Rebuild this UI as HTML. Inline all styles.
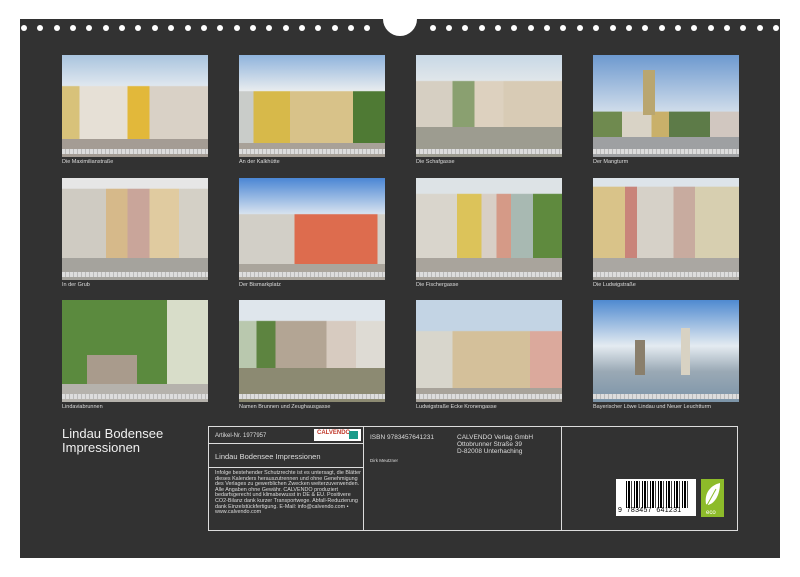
<!DOCTYPE html>
<html><head><meta charset="utf-8"><style>
*{margin:0;padding:0;box-sizing:border-box}
body{width:800px;height:577px;background:#fff;position:relative;overflow:hidden;font-family:"Liberation Sans",sans-serif}
#panel{position:absolute;left:20px;top:19px;width:760px;height:539px;background:#323232}
.dot{position:absolute;width:6px;height:6px;border-radius:50%;background:#fff;top:25px}
#notch{position:absolute;left:383px;top:2px;width:34px;height:34px;border-radius:50%;background:#fff}
.ph{position:absolute;width:146px;height:102px;overflow:hidden}
.ph .st{position:absolute;left:0;right:0;bottom:3px;height:5px;background:repeating-linear-gradient(90deg,#ddd 0 3px,#bbb 3px 4px)}
.cap{position:absolute;font-size:5.5px;color:#ddd}
.w{position:absolute;border:1.5px solid #ddd}
.t{position:absolute;color:#ddd}
</style></head><body>
<div id="panel"></div>
<div id="notch"></div>
<div id="dots"></div>
<script>
var d=document.getElementById('dots'),h='';
for(var i=0;i<22;i++){h+='<div class="dot" style="left:'+(21+i*16.35)+'px"></div>';}
for(var i=0;i<22;i++){h+='<div class="dot" style="left:'+(773-i*16.35)+'px"></div>';}
d.innerHTML=h;
</script>

<!-- Row 1 -->
<div class="ph" style="left:62px;top:55px;background:linear-gradient(180deg,#a9c4de 0%,#dfe7ef 30%,transparent 31%),linear-gradient(90deg,#d8c27a 0 12%,#e6e0d6 12% 45%,#e2b83a 45% 60%,#d9d1c6 60% 100%);"><div style="position:absolute;left:0;right:0;bottom:0;height:18px;background:#a49c94"></div><div class="st"></div></div>
<div class="ph" style="left:239px;top:55px;background:linear-gradient(180deg,#8fb3dc 0%,#e8ecef 35%,transparent 36%),linear-gradient(90deg,#c9ccc9 0 10%,#d7b94a 10% 35%,#d8c289 35% 78%,#4f7a34 78% 100%);"><div style="position:absolute;left:0;right:0;bottom:0;height:14px;background:#a8a198"></div><div class="st"></div></div>
<div class="ph" style="left:416px;top:55px;background:linear-gradient(180deg,#c8d8e6 0%,#e0e6ea 25%,transparent 26%),linear-gradient(90deg,#d6cfc2 0 25%,#8aa070 25% 40%,#ddd1bf 40% 60%,#d8cbb5 60% 100%);"><div style="position:absolute;left:0;right:0;bottom:0;height:30px;background:#9d9c90"></div><div class="st"></div></div>
<div class="ph" style="left:593px;top:55px;background:linear-gradient(180deg,#6d99cf 0%,#cfdcea 55%,transparent 56%),linear-gradient(90deg,#6f8a4f 0 20%,#d9d3c6 20% 40%,#c9b06a 40% 52%,#5d7b48 52% 80%,#d1c7c0 80% 100%);"><div style="position:absolute;left:50px;top:15px;width:12px;height:45px;background:#b9a670"></div><div style="position:absolute;left:0;right:0;bottom:0;height:20px;background:#9ea0a2"></div><div class="st"></div></div>
<div class="cap" style="left:62px;top:159px">Die Maximilianstraße</div>
<div class="cap" style="left:239px;top:159px">An der Kalkhütte</div>
<div class="cap" style="left:416px;top:159px">Die Schafgasse</div>
<div class="cap" style="left:593px;top:159px">Der Mangturm</div>

<!-- Row 2 -->
<div class="ph" style="left:62px;top:178px;background:linear-gradient(180deg,#e6e6e6 0 10%,transparent 11%),linear-gradient(90deg,#cfcbc2 0 30%,#d6b98a 30% 45%,#c9a59a 45% 60%,#e0cba0 60% 80%,#d4d0c6 80% 100%);"><div style="position:absolute;left:0;right:0;bottom:0;height:22px;background:#a5a39d"></div><div class="st"></div></div>
<div class="ph" style="left:239px;top:178px;background:linear-gradient(180deg,#4a86d4 0%,#d6e2ef 35%,transparent 36%),linear-gradient(90deg,#d2cfc7 0 38%,#dd6c4e 38% 95%,#d2cfc7 95% 100%);"><div style="position:absolute;left:0;right:0;bottom:0;height:16px;background:#aaa59c"></div><div class="st"></div></div>
<div class="ph" style="left:416px;top:178px;background:linear-gradient(180deg,#dde3e6 0 15%,transparent 16%),linear-gradient(90deg,#d9d5cc 0 28%,#dcc35a 28% 45%,#d8cfc6 45% 55%,#d59a87 55% 65%,#a8b9b2 65% 80%,#5f8a3e 80% 100%);"><div style="position:absolute;left:0;right:0;bottom:0;height:22px;background:#a9a49c"></div><div class="st"></div></div>
<div class="ph" style="left:593px;top:178px;background:linear-gradient(180deg,#dde4ea 0 8%,transparent 9%),linear-gradient(90deg,#d9c389 0 22%,#c9847a 22% 30%,#d6d1c8 30% 55%,#c8ab9f 55% 70%,#d7cfb0 70% 100%);"><div style="position:absolute;left:0;right:0;bottom:0;height:22px;background:#aaa7a2"></div><div class="st"></div></div>
<div class="cap" style="left:62px;top:282px">In der Grub</div>
<div class="cap" style="left:239px;top:282px">Der Bismarkplatz</div>
<div class="cap" style="left:416px;top:282px">Die Fischergasse</div>
<div class="cap" style="left:593px;top:282px">Die Ludwigstraße</div>

<!-- Row 3 -->
<div class="ph" style="left:62px;top:300px;background:linear-gradient(90deg,#5b8a3e 0 72%,#d8ddc9 72% 100%);"><div style="position:absolute;left:25px;top:55px;width:50px;height:30px;background:#a99b8c"></div><div style="position:absolute;left:0;right:0;bottom:0;height:18px;background:#b5b2ac"></div><div class="st"></div></div>
<div class="ph" style="left:239px;top:300px;background:linear-gradient(180deg,#dfe6ec 0 20%,transparent 21%),linear-gradient(90deg,#b9c8ae 0 12%,#5d8440 12% 25%,#b3a594 25% 60%,#d7cbc0 60% 80%,#dedbd4 80% 100%);"><div style="position:absolute;left:0;right:0;bottom:0;height:34px;background:#8c8a72"></div><div class="st"></div></div>
<div class="ph" style="left:416px;top:300px;background:linear-gradient(180deg,#c3d4e4 0 30%,transparent 31%),linear-gradient(90deg,#d8d6cc 0 25%,#d4c09a 25% 78%,#dba99c 78% 100%);"><div style="position:absolute;left:0;right:0;bottom:0;height:14px;background:#a8a39a"></div><div class="st"></div></div>
<div class="ph" style="left:593px;top:300px;background:linear-gradient(180deg,#4f8ad0 0%,#e4ebf1 45%,#9aa9b5 70%,#7c94a8 100%);"><div style="position:absolute;left:42px;top:40px;width:10px;height:35px;background:#8a7f6c"></div><div style="position:absolute;left:88px;top:28px;width:9px;height:47px;background:#d8d2c3"></div><div class="st"></div></div>
<div class="cap" style="left:62px;top:404px">Lindaviabrunnen</div>
<div class="cap" style="left:239px;top:404px">Namen Brunnen und Zeughausgasse</div>
<div class="cap" style="left:416px;top:404px">Ludwigstraße Ecke Kronengasse</div>
<div class="cap" style="left:593px;top:404px">Bayerischer Löwe Lindau und Neuer Leuchtturm</div>

<!-- Title -->
<div class="t" style="left:62px;top:427px;font-size:13px;line-height:14px;color:#f0f0f0">Lindau Bodensee<br>Impressionen</div>

<!-- Info box -->
<div class="w" style="left:208px;top:426px;width:530px;height:105px"></div>
<div class="w" style="left:363px;top:426px;width:1.5px;height:105px;border-width:0 0 0 1.5px"></div>
<div class="w" style="left:561px;top:426px;width:1.5px;height:105px;border-width:0 0 0 1.5px"></div>
<div class="w" style="left:208px;top:443px;width:156px;height:1.5px;border-width:1.5px 0 0 0"></div>
<div class="w" style="left:208px;top:467px;width:156px;height:1.5px;border-width:1.5px 0 0 0"></div>
<div class="t" style="left:215px;top:433px;font-size:6px">Artikel-Nr. 1977957</div>
<div style="position:absolute;left:314px;top:429px;width:47px;height:12px;background:#fff"><span style="position:absolute;left:3px;top:1px;font-size:6px;font-weight:bold;color:#c0392b">CALVENDO</span><span style="position:absolute;right:3px;top:2px;width:9px;height:8px;background:#1a9b8a"></span></div>
<div class="t" style="left:215px;top:452px;font-size:7.5px">Lindau Bodensee Impressionen</div>
<div class="t" style="left:215px;top:471px;font-size:5.4px;line-height:5.6px;width:146px">Infolge bestehender Schutzrechte ist es untersagt, die Blätter dieses Kalenders herauszutrennen und ohne Genehmigung des Verlages zu gewerblichen Zwecken weiterzuverwenden. Alle Angaben ohne Gewähr. CALVENDO produziert bedarfsgerecht und klimabewusst in DE &amp; EU. Positivere CO2-Bilanz dank kurzer Transportwege. Abfall-Reduzierung dank Einzelstückfertigung. E-Mail: info@calvendo.com • www.calvendo.com</div>
<div class="t" style="left:370px;top:434px;font-size:6.5px">ISBN 9783457641231</div>
<div class="t" style="left:370px;top:458px;font-size:4.5px">Dirk Meutzner</div>
<div class="t" style="left:457px;top:434px;font-size:6.5px;line-height:7px">CALVENDO Verlag GmbH<br>Ottobrunner Straße 39<br>D-82008 Unterhaching</div>

<!-- Barcode -->
<div style="position:absolute;left:616px;top:479px;width:80px;height:37px;background:#fff">
<div style="position:absolute;left:10px;top:2px;width:62px;height:27px;background:repeating-linear-gradient(90deg,#000 0 1px,#fff 1px 2px,#000 2px 4px,#fff 4px 5px,#444 5px 6px,#fff 6px 8px)"></div>
<div style="position:absolute;left:2px;top:28px;font-size:7px;color:#000;letter-spacing:0.3px">9&nbsp;&nbsp;783457&nbsp;&nbsp;641231</div>
</div>
<div style="position:absolute;left:701px;top:479px;width:23px;height:38px;background:#8dbb2a">
<svg width="23" height="38" viewBox="0 0 23 38"><path d="M5 25 C3 14 10 6 19 4 C19 14 15 24 7 26 Z" fill="#fff"/><path d="M5 28 L15 10" stroke="#8dbb2a" stroke-width="1"/><text x="5" y="35" font-size="6" fill="#fff" font-family="Liberation Sans">eco</text></svg>
</div>
</body></html>
